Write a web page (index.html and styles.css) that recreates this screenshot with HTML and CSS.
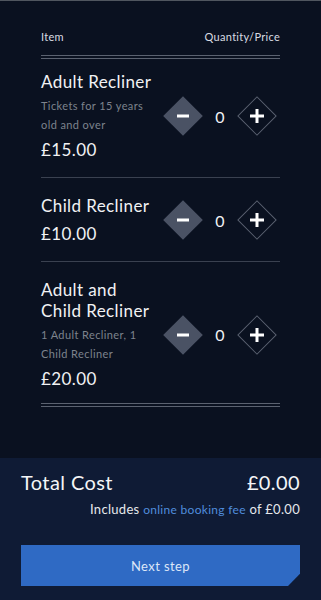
FILE: index.html
```
<!DOCTYPE html>
<html>
<head>
    <meta name="viewport" content="width=device-width, initial-scale=1">
    <title>Tickets</title>
    <link rel="stylesheet" href="styles.css">
</head>
<body>
    <div class="page">
        <div class="tickets">
            <div class="tableHead">
                <span>Item</span>
                <span>Quantity/Price</span>
            </div>

            <div class="ticket">
                <div class="info">
                    <div class="name">Adult Recliner</div>
                    <div class="desc">Tickets for 15 years old and over</div>
                    <div class="price">£15.00</div>
                </div>
                <div class="qty">
                    <span class="diamond minus"><svg width="14" height="14" viewBox="0 0 14 14"><rect x="1" y="5.5" width="12" height="3" fill="#fff"/></svg></span>
                    <span class="count">0</span>
                    <span class="diamond plus"><svg width="16" height="16" viewBox="0 0 16 16"><rect x="1" y="6.5" width="14" height="3" fill="#fff"/><rect x="6.5" y="1" width="3" height="14" fill="#fff"/></svg></span>
                </div>
            </div>

            <div class="ticket">
                <div class="info">
                    <div class="name">Child Recliner</div>
                    <div class="price short">£10.00</div>
                </div>
                <div class="qty">
                    <span class="diamond minus"><svg width="14" height="14" viewBox="0 0 14 14"><rect x="1" y="5.5" width="12" height="3" fill="#fff"/></svg></span>
                    <span class="count">0</span>
                    <span class="diamond plus"><svg width="16" height="16" viewBox="0 0 16 16"><rect x="1" y="6.5" width="14" height="3" fill="#fff"/><rect x="6.5" y="1" width="3" height="14" fill="#fff"/></svg></span>
                </div>
            </div>

            <div class="ticket last">
                <div class="info">
                    <div class="name">Adult and Child Recliner</div>
                    <div class="desc">1 Adult Recliner, 1 Child Recliner</div>
                    <div class="price">£20.00</div>
                </div>
                <div class="qty">
                    <span class="diamond minus"><svg width="14" height="14" viewBox="0 0 14 14"><rect x="1" y="5.5" width="12" height="3" fill="#fff"/></svg></span>
                    <span class="count">0</span>
                    <span class="diamond plus"><svg width="16" height="16" viewBox="0 0 16 16"><rect x="1" y="6.5" width="14" height="3" fill="#fff"/><rect x="6.5" y="1" width="3" height="14" fill="#fff"/></svg></span>
                </div>
            </div>
        </div>

        <div class="footer">
            <div class="total">
                <span>Total Cost</span>
                <span>£0.00</span>
            </div>
            <div class="fee">Includes <span class="feeLink">online booking fee</span> of £0.00</div>
            <button type="button" class="nextBtn">Next step</button>
        </div>
    </div>
</body>
</html>
```

FILE: styles.css
```
html, body {
    margin: 0;
    padding: 0;
}

body {
    font-family: Lato, "Open Sans", Arial, sans-serif;
    background-color: #0a1120;
    color: #e8eaee;
}

.page {
    height: 600px;
    display: flex;
    flex-direction: column;
    border-top: 1px solid #50565f;
    box-sizing: border-box;
}

.tickets {
    flex: 1;
    padding: 29px 41px 0 41px;
}

.tableHead {
    display: flex;
    justify-content: space-between;
    font-size: 11px;
    line-height: 14px;
    letter-spacing: 0.3px;
    color: #d9dce2;
    padding-bottom: 11px;
    border-bottom: 4px double #5b6270;
}

.ticket {
    display: flex;
    align-items: center;
    padding: 17px 0 16px 0;
    border-bottom: 1px solid #3a4150;
}

.tableHead + .ticket {
    padding-top: 12px;
    padding-bottom: 16px;
}

.ticket.last {
    padding-bottom: 13px;
    border-bottom: 4px double #5b6270;
}

.info {
    flex: 1;
    padding-right: 4px;
}

.name {
    font-size: 17px;
    line-height: 21px;
    letter-spacing: 0.4px;
    color: #f1f2f4;
    width: 118px;
}

.desc {
    font-size: 11px;
    line-height: 19px;
    letter-spacing: 0.4px;
    color: #7d838d;
    margin-top: 4px;
    width: 110px;
}

.price {
    font-size: 17px;
    line-height: 22px;
    letter-spacing: 0.4px;
    color: #f1f2f4;
    margin-top: 5px;
}

.price.short {
    margin-top: 7px;
}

.qty {
    display: flex;
    align-items: center;
    padding-right: 3px;
}

.diamond {
    width: 40px;
    height: 40px;
    display: flex;
    align-items: center;
    justify-content: center;
    position: relative;
}

.diamond::before {
    content: "";
    position: absolute;
    left: 6px;
    top: 6px;
    width: 28px;
    height: 28px;
    transform: rotate(45deg);
    box-sizing: border-box;
}

.diamond svg {
    position: relative;
}

.minus::before {
    background-color: #4a5264;
}

.plus::before {
    border: 1px solid #5a6170;
}

.count {
    width: 34px;
    text-align: center;
    font-size: 16px;
    color: #f1f2f4;
}

.footer {
    background-color: #0f1b35;
    padding: 12px 21px 14px 21px;
}

.total {
    display: flex;
    justify-content: space-between;
    font-size: 20px;
    line-height: 24px;
    letter-spacing: 0.4px;
    color: #f4f5f7;
}

.fee {
    text-align: right;
    font-size: 13px;
    line-height: 16px;
    letter-spacing: 0.3px;
    margin-top: 7px;
    color: #e6e8ec;
}

.feeLink {
    color: #4f8ddd;
    font-size: 12px;
}

.nextBtn {
    display: block;
    width: 100%;
    height: 41px;
    margin-top: 27px;
    border: none;
    background-color: #2f6ac4;
    color: #dde7f8;
    font-family: Lato, "Open Sans", Arial, sans-serif;
    font-size: 13px;
    letter-spacing: 0.4px;
    clip-path: polygon(0 0, 100% 0, 100% 70%, calc(100% - 12px) 100%, 0 100%);
}
```
